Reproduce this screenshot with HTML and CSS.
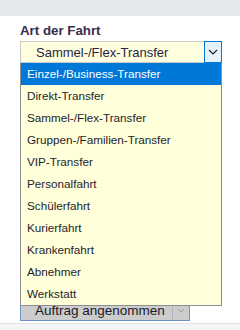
FILE: index.html
```html
<!DOCTYPE html>
<html lang="de">
<head>
<meta charset="utf-8">
<link rel="stylesheet" href="styles.css">
</head>
<body>
<div class="topbar"></div>
<div class="form">
  <div class="label">Art der Fahrt</div>
  <div class="select-wrap">
    <div class="select">
      <span class="select-text">Sammel-/Flex-Transfer</span>
      <span class="arrow"><svg width="10" height="6" viewBox="0 0 10 6"><path d="M1 1 L5 5 L9 1" fill="none" stroke="#222" stroke-width="1.2"/></svg></span>
    </div>
    <ul class="dropdown">
      <li class="active">Einzel-/Business-Transfer</li>
      <li>Direkt-Transfer</li>
      <li>Sammel-/Flex-Transfer</li>
      <li>Gruppen-/Familien-Transfer</li>
      <li>VIP-Transfer</li>
      <li>Personalfahrt</li>
      <li>Schülerfahrt</li>
      <li>Kurierfahrt</li>
      <li>Krankenfahrt</li>
      <li>Abnehmer</li>
      <li>Werkstatt</li>
    </ul>
  </div>
  <div class="status">
    <span class="status-text">Auftrag angenommen</span>
    <span class="status-arrow"><svg width="8" height="5" viewBox="0 0 8 5"><path d="M1 1 L4 4 L7 1" fill="none" stroke="#999" stroke-width="1"/></svg></span>
  </div>
</div>
<div class="bottombar"></div>
</body>
</html>
```
FILE: styles.css
```css
html, body {
  margin: 0;
  padding: 0;
  background: #ffffff;
  font-family: "Liberation Sans", Arial, sans-serif;
  overflow: hidden;
}
.topbar {
  height: 16px;
  background: #e3e8eb;
}
.form {
  padding-left: 20px;
  width: 202px;
}
.label {
  margin-top: 7px;
  font-weight: bold;
  font-size: 13.3px;
  line-height: 15px;
  color: #3b2c4c;
}
.select-wrap {
  position: relative;
  margin-top: 3px;
}
.select {
  box-sizing: border-box;
  height: 22px;
  border: 1px solid #c9c9c9;
  background: #ffffe0;
  display: flex;
  align-items: center;
}
.select-text {
  flex: 1;
  padding-left: 15px;
  font-size: 13px;
  color: #2a2540;
}
.arrow {
  box-sizing: border-box;
  width: 18px;
  height: 22px;
  margin: -1px -1px -1px 0;
  border: 1px solid #0078d7;
  background: #e5f1fb;
  display: flex;
  align-items: center;
  justify-content: center;
}
.dropdown {
  position: absolute;
  top: 22px;
  left: 0;
  box-sizing: border-box;
  width: 202px;
  margin: 0;
  padding: 0;
  list-style: none;
  border: 1px solid #8f8f8f;
  border-top: none;
  background: #ffffd9;
  z-index: 2;
}
.dropdown li {
  height: 22px;
  line-height: 22px;
  padding-left: 6px;
  font-size: 11.7px;
  color: #1e1e30;
  white-space: nowrap;
}
.dropdown li.active {
  background: #0078d7;
  color: #ffffff;
}
.status {
  box-sizing: border-box;
  margin-top: 236px;
  width: 170px;
  height: 22px;
  border: 1px solid #6f94c4;
  background: #cccccc;
  display: flex;
  align-items: center;
  overflow: hidden;
}
.status-text {
  flex: 1;
  min-width: 0;
  padding-left: 14px;
  font-size: 13.5px;
  color: #1a1a2a;
  white-space: nowrap;
  overflow: hidden;
}
.status-arrow {
  box-sizing: border-box;
  flex: none;
  width: 17px;
  height: 20px;
  border-left: 1px solid #b5b5b5;
  display: flex;
  align-items: center;
  justify-content: center;
}
.bottombar {
  margin-top: 2px;
  height: 10px;
  border-top: 1px solid #e2e4e6;
  background: #f4f5f7;
}
```
